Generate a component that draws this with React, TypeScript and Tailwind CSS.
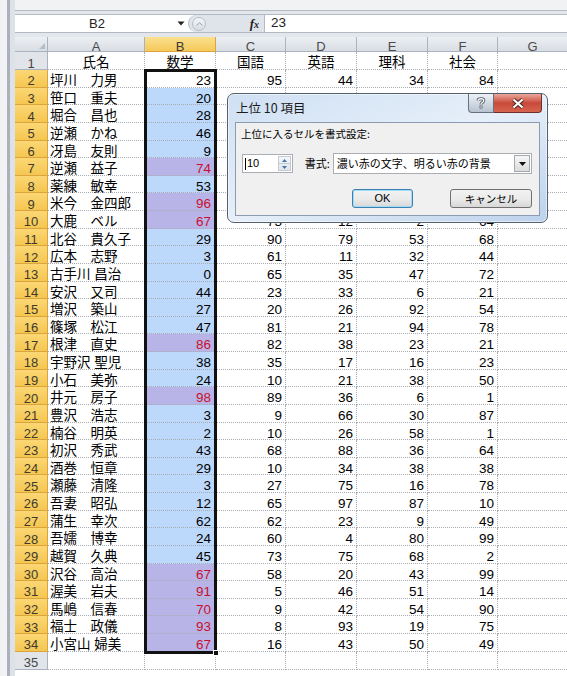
import React from "react";

type Row = [string, number, number | null, number | null, number | null, number | null];

const data: Row[] = [
  ["坪川　力男", 23, 95, 44, 34, 84],
  ["笹口　重夫", 20, null, null, null, null],
  ["堀合　昌也", 28, null, null, null, null],
  ["逆瀬　かね", 46, null, null, null, null],
  ["冴島　友則", 9, null, null, null, null],
  ["逆瀬　益子", 74, null, null, null, null],
  ["薬練　敏幸", 53, null, null, null, null],
  ["米今　金四郎", 96, null, null, null, null],
  ["大鹿　ベル", 67, 73, 12, 2, 64],
  ["北谷　貴久子", 29, 90, 79, 53, 68],
  ["広本　志野", 3, 61, 11, 32, 44],
  ["古手川 昌治", 0, 65, 35, 47, 72],
  ["安沢　又司", 44, 23, 33, 6, 21],
  ["増沢　築山", 27, 20, 26, 92, 54],
  ["篠塚　松江", 47, 81, 21, 94, 78],
  ["根津　直史", 86, 82, 38, 23, 21],
  ["宇野沢 聖児", 38, 35, 17, 16, 23],
  ["小石　美弥", 24, 10, 21, 38, 50],
  ["井元　房子", 98, 89, 36, 6, 1],
  ["豊沢　浩志", 3, 9, 66, 30, 87],
  ["楠谷　明英", 2, 10, 26, 58, 1],
  ["初沢　秀武", 43, 68, 88, 36, 64],
  ["酒巻　恒章", 29, 10, 34, 38, 38],
  ["瀬藤　清隆", 3, 27, 75, 16, 78],
  ["吾妻　昭弘", 12, 65, 97, 87, 10],
  ["蒲生　幸次", 62, 62, 23, 9, 49],
  ["吾嬬　博幸", 24, 60, 4, 80, 99],
  ["越賀　久典", 45, 73, 75, 68, 2],
  ["沢谷　高治", 67, 58, 20, 43, 99],
  ["渥美　岩夫", 91, 5, 46, 51, 14],
  ["馬嶋　信春", 70, 9, 42, 54, 90],
  ["福士　政儀", 93, 8, 93, 19, 75],
  ["小宮山 婦美", 67, 16, 43, 50, 49],
];

const cell =
  "border-r border-b border-dotted border-[#a9adb3] flex items-center shrink-0 pt-[5px] leading-none";

function ColHeader({ label, w, active }: { label: string; w: string; active?: boolean }) {
  return (
    <div
      className={`${w} h-full shrink-0 flex items-center justify-center pt-[5px] leading-none border-r border-b text-[13px] ${
        active
          ? "bg-gradient-to-b from-[#fbe08e] to-[#f6c959] border-[#d9a53c] text-[#3a3a3a]"
          : "bg-gradient-to-b from-[#eceff3] to-[#d9dee4] border-[#a9b3bf] text-[#4a4a4a]"
      }`}
    >
      {label}
    </div>
  );
}

export default function App() {
  return (
    <div className="w-[567px] h-[676px] overflow-hidden bg-white relative flex font-['Liberation_Sans','Noto_Sans_CJK_JP',sans-serif] text-[13.5px] text-black">
      {/* left window frame */}
      <div className="w-[15px] shrink-0 flex">
        <div className="w-[7px] bg-[#f0f2f4]" />
        <div className="w-[3px] bg-[#aab1ba]" />
        <div className="w-[5px] bg-[#dde2e8]" />
      </div>

      <div className="flex-1 min-w-0 flex flex-col">
        {/* top frame */}
        <div className="h-[10px] shrink-0 bg-[#f0f2f4]" />
        <div className="h-[1px] shrink-0 bg-[#b3bac4]" />
        <div className="h-[3px] shrink-0 bg-[#e3e7ec]" />

        {/* formula bar */}
        <div className="h-[19px] shrink-0 flex border-t border-b border-[#b3bac4]">
          <div className="w-[173px] shrink-0 bg-white flex items-center">
            <span className="w-[164px] text-center text-[13px] text-[#222]">B2</span>
            <svg width="8" height="5" viewBox="0 0 8 5" className="ml-[-2px]">
              <path d="M0.5 0.5 L7.5 0.5 L4 4.5 Z" fill="#222" />
            </svg>
          </div>
          <div className="w-[76px] shrink-0 flex items-center bg-[#dfe4ea] rounded-l-[9px] border-l border-[#b3bac4]">
            <div className="ml-[3px] w-[14px] h-[14px] rounded-full border border-[#b7bec7] bg-gradient-to-b from-[#f3f5f8] to-[#d8dde3] flex items-center justify-center">
              <svg width="7" height="4" viewBox="0 0 7 4">
                <path d="M0.5 3.5 L3.5 0.8 L6.5 3.5" fill="none" stroke="#9aa2ac" strokeWidth="1" />
              </svg>
            </div>
            <span className="ml-auto mr-[5px] font-['Liberation_Serif',serif] italic font-bold text-[13px] text-[#222] leading-none">
              f<span className="text-[10px]">x</span>
            </span>
          </div>
          <div className="flex-1 bg-white border-l border-[#b3bac4] flex items-center pl-[6px] text-[13.5px] text-[#222]">
            23
          </div>
        </div>
        <div className="h-[4px] shrink-0 bg-[#e3e7ec]" />

        {/* grid */}
        <div className="relative flex-1 min-h-0">
          {/* column header row */}
          <div className="h-[15px] flex">
            <div className="w-[33px] h-full shrink-0 bg-gradient-to-b from-[#eceff3] to-[#d9dee4] border-r border-b border-[#a9b3bf] flex items-end justify-end pr-[2px] pb-[2px]">
              <svg width="6" height="6" viewBox="0 0 6 6">
                <path d="M6 0 L6 6 L0 6 Z" fill="#b4bcc6" />
              </svg>
            </div>
            <ColHeader label="A" w="w-[97px]" />
            <ColHeader label="B" w="w-[71px]" active />
            <ColHeader label="C" w="w-[70px]" />
            <ColHeader label="D" w="w-[71px]" />
            <ColHeader label="E" w="w-[71px]" />
            <ColHeader label="F" w="w-[70px]" />
            <div className="flex-1 h-full flex items-center justify-center pt-[5px] leading-none bg-gradient-to-b from-[#eceff3] to-[#d9dee4] border-b border-[#a9b3bf] text-[13px] text-[#4a4a4a]">
              G
            </div>
          </div>

          {/* row 1 */}
          <div className="h-[18px] flex">
            <div className="w-[33px] shrink-0 h-full bg-[#e1e5ea] border-r border-b border-[#a9b3bf] flex items-center justify-center pt-[5px] leading-none text-[13px] text-[#444]">
              1
            </div>
            <div className={`${cell} w-[97px] h-full justify-center`}>氏名</div>
            <div className={`${cell} w-[71px] h-full justify-center`}>数学</div>
            <div className={`${cell} w-[70px] h-full justify-center`}>国語</div>
            <div className={`${cell} w-[71px] h-full justify-center`}>英語</div>
            <div className={`${cell} w-[71px] h-full justify-center`}>理科</div>
            <div className={`${cell} w-[70px] h-full justify-center`}>社会</div>
            <div className="flex-1 h-full border-b border-dotted border-[#a9adb3]" />
          </div>

          {/* data rows */}
          {data.map((r, i) => {
            const top = r[1] >= 67;
            const bBg = i === 0 ? "bg-white" : top ? "bg-[#b8b4e8]" : "bg-[#bcd8fa]";
            return (
              <div key={i} className="h-[17.64px] flex">
                <div className="w-[33px] shrink-0 h-full bg-gradient-to-b from-[#fbd774] to-[#f5c650] border-r border-b border-[#d9a53c] flex items-center justify-center pt-[5px] leading-none text-[13px] text-[#3d3a30]">
                  {i + 2}
                </div>
                <div className={`${cell} w-[97px] h-full pl-[2px] whitespace-pre`}>{r[0]}</div>
                <div className={`${cell} w-[71px] h-full justify-end pr-[4px] ${bBg} ${top ? "text-[#c8102c]" : ""}`}>
                  {r[1]}
                </div>
                <div className={`${cell} w-[70px] h-full justify-end pr-[3px]`}>{r[2]}</div>
                <div className={`${cell} w-[71px] h-full justify-end pr-[3px]`}>{r[3]}</div>
                <div className={`${cell} w-[71px] h-full justify-end pr-[3px]`}>{r[4]}</div>
                <div className={`${cell} w-[70px] h-full justify-end pr-[3px]`}>{r[5]}</div>
                <div className="flex-1 h-full border-b border-dotted border-[#a9adb3]" />
              </div>
            );
          })}

          {/* row 35 */}
          <div className="h-[18px] flex">
            <div className="w-[33px] shrink-0 h-full bg-[#e1e5ea] border-r border-b border-[#a9b3bf] flex items-center justify-center pt-[5px] leading-none text-[13px] text-[#444]">
              35
            </div>
            <div className={`${cell} w-[97px] h-full`} />
            <div className={`${cell} w-[71px] h-full`} />
            <div className={`${cell} w-[70px] h-full`} />
            <div className={`${cell} w-[71px] h-full`} />
            <div className={`${cell} w-[71px] h-full`} />
            <div className={`${cell} w-[70px] h-full`} />
            <div className="flex-1 h-full border-b border-dotted border-[#a9adb3]" />
          </div>

          {/* selection border */}
          <div className="absolute left-[129px] top-[32px] w-[73px] h-[585px] border-[3px] border-[#111] pointer-events-none" />
          <div className="absolute left-[198px] top-[613px] w-[6px] h-[6px] bg-[#111] border border-white" />
        </div>
      </div>

      {/* dialog */}
      <div className="absolute left-[227px] top-[93px] w-[321px] h-[130px] rounded-[7px] border border-[#55606d] bg-gradient-to-br from-[#cfe0f3] via-[#e6eff9] to-[#bcd2ec] flex flex-col font-['Noto_Sans_CJK_JP',sans-serif] text-[11px] text-black shadow-[inset_0_0_0_1px_rgba(255,255,255,0.55)]">
        <div className="h-[28px] shrink-0 flex items-start">
          <span className="ml-[8px] mt-[6px] text-[12.5px] leading-[16px] text-[#1a1a1a]">上位 10 項目</span>
          <div className="ml-auto mr-[5px] flex">
            <div className="w-[26px] h-[19px] rounded-bl-[4px] border border-t-0 border-[#66717f] bg-gradient-to-b from-[#eef2f6] via-[#d2dae3] to-[#b7c3d0] flex items-center justify-center">
              <svg width="10" height="12" viewBox="0 0 10 12">
                <path
                  d="M2.2 3.6 C2.2 1.2 7.8 1.2 7.8 3.6 C7.8 5.6 5 5.4 5 7.6"
                  fill="none"
                  stroke="#4a5460"
                  strokeWidth="3"
                />
                <path
                  d="M2.2 3.6 C2.2 1.2 7.8 1.2 7.8 3.6 C7.8 5.6 5 5.4 5 7.6"
                  fill="none"
                  stroke="#ffffff"
                  strokeWidth="1.4"
                />
                <rect x="3.6" y="8.6" width="2.8" height="2.8" fill="#4a5460" />
                <rect x="4.3" y="9.3" width="1.4" height="1.4" fill="#ffffff" />
              </svg>
            </div>
            <div className="w-[48px] h-[19px] rounded-br-[4px] border border-t-0 border-l-0 border-[#6e2f2a] bg-gradient-to-b from-[#e9a79c] via-[#c8493a] to-[#d6654f] flex items-center justify-center">
              <svg width="14" height="11" viewBox="0 0 14 11">
                <path d="M2.5 1.5 L11.5 9.5 M11.5 1.5 L2.5 9.5" stroke="#4b2220" strokeWidth="4" />
                <path d="M2.5 1.5 L11.5 9.5 M11.5 1.5 L2.5 9.5" stroke="#ffffff" strokeWidth="2.2" />
              </svg>
            </div>
          </div>
        </div>

        <div className="mx-[7px] mb-[6px] flex-1 border border-[#8c9bb0] bg-[#f0f0f0] flex flex-col pl-[5px] pr-[7px]">
          <div className="mt-[3px] h-[16px] leading-[16px] text-[10.5px]">上位に入るセルを書式設定:</div>
          <div className="mt-[11px] h-[21px] flex items-center">
            <div className="w-[51px] h-[19px] ml-[1px] bg-white border border-[#abadb3] flex items-center">
              <span className="ml-[2px] w-[1px] h-[12px] bg-black" />
              <span className="ml-[1px] text-[11px] leading-none font-['Liberation_Sans',sans-serif]">10</span>
              <div className="ml-auto mr-[1px] w-[13px] h-[15px] flex flex-col border border-[#c5cbd3] bg-gradient-to-b from-[#f4f6f9] to-[#dfe5ec]">
                <div className="flex-1 flex items-center justify-center border-b border-[#c5cbd3]">
                  <svg width="5" height="3" viewBox="0 0 5 3">
                    <path d="M0 3 L2.5 0 L5 3 Z" fill="#4b74a8" />
                  </svg>
                </div>
                <div className="flex-1 flex items-center justify-center">
                  <svg width="5" height="3" viewBox="0 0 5 3">
                    <path d="M0 0 L2.5 3 L5 0 Z" fill="#4b74a8" />
                  </svg>
                </div>
              </div>
            </div>
            <span className="ml-[12px] w-[28px] whitespace-nowrap">書式:</span>
            <div className="w-[200px] h-[21px] bg-white border border-[#abadb3] flex items-center">
              <span className="ml-[3px] whitespace-nowrap">濃い赤の文字、明るい赤の背景</span>
              <div className="ml-auto mr-[1px] w-[16px] h-[17px] border border-[#a3a9b1] bg-gradient-to-b from-[#f7f7f7] to-[#dcdcdc] flex items-center justify-center">
                <svg width="7" height="4" viewBox="0 0 7 4">
                  <path d="M0 0 L7 0 L3.5 4 Z" fill="#111" />
                </svg>
              </div>
            </div>
          </div>
          <div className="mt-[15px] flex">
            <div className="ml-[111px] w-[61px] h-[19px] rounded-[3px] border border-[#3c7fb1] shadow-[inset_0_0_0_1px_#9fdcf7] bg-gradient-to-b from-[#f2f2f2] via-[#ebebeb] to-[#d8d8d8] flex items-center justify-center text-[11px] font-['Liberation_Sans',sans-serif]">
              OK
            </div>
            <div className="ml-[37px] w-[82px] h-[19px] rounded-[3px] border border-[#707070] bg-gradient-to-b from-[#f2f2f2] via-[#ebebeb] to-[#d8d8d8] flex items-center justify-center text-[10.5px]">
              キャンセル
            </div>
          </div>
        </div>
      </div>
    </div>
  );
}
